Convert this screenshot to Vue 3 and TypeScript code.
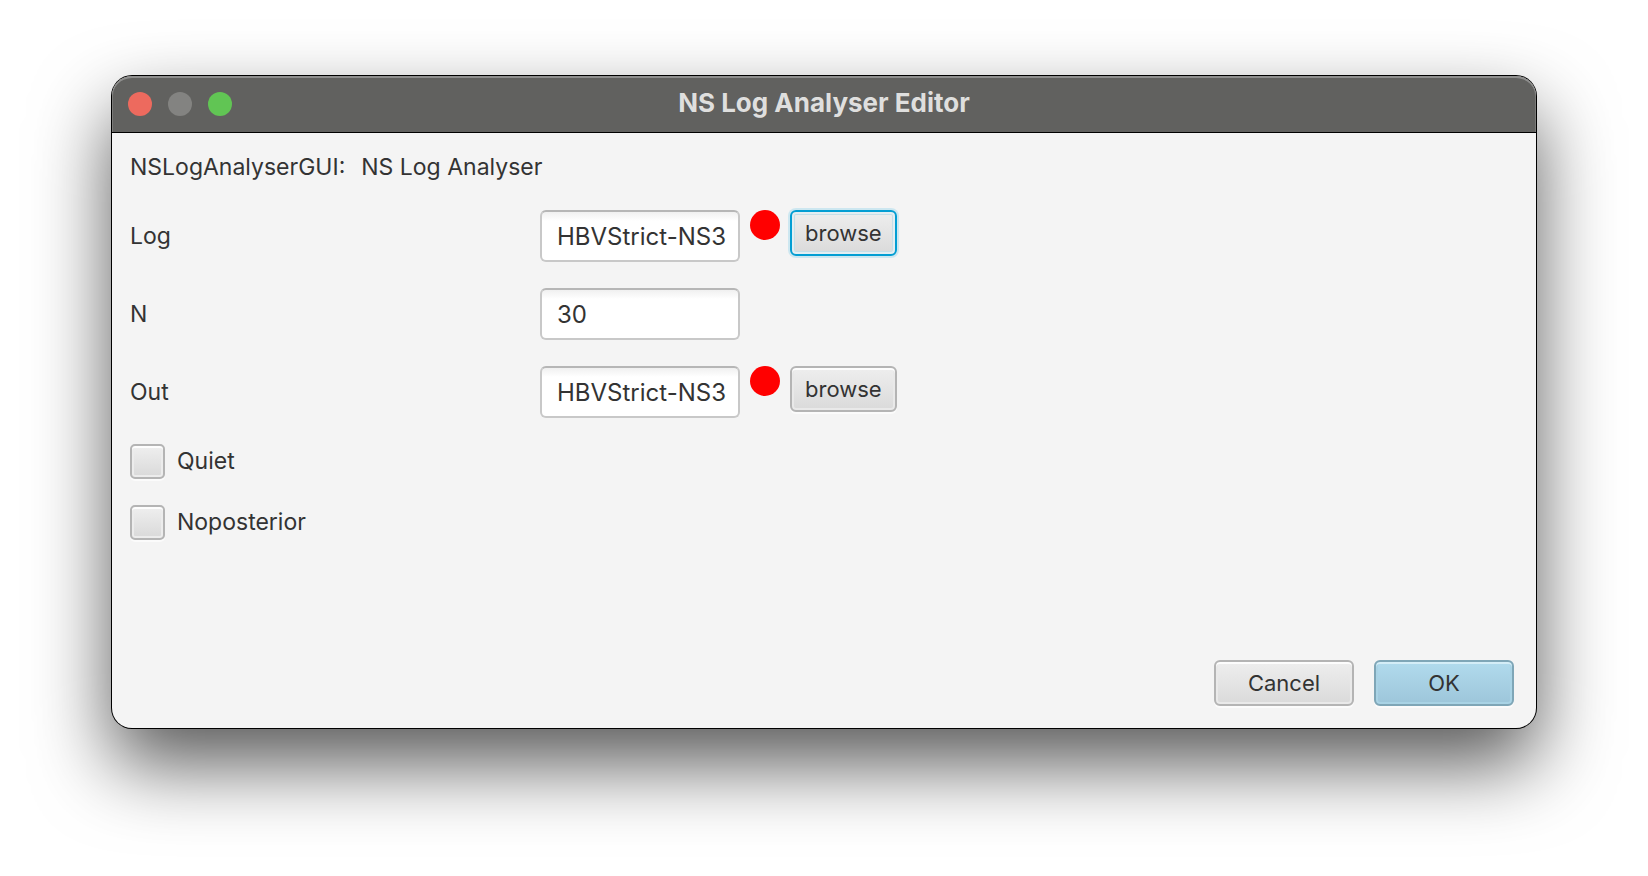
<script setup lang="ts">
import { reactive } from 'vue'

interface Field {
  id: string
  label: string
  value: string
  browse: boolean
  focused?: boolean
}

const fields = reactive<Field[]>([
  { id: 'log', label: 'Log', value: 'HBVStrict-NS3', browse: true, focused: true },
  { id: 'n', label: 'N', value: '30', browse: false },
  { id: 'out', label: 'Out', value: 'HBVStrict-NS3', browse: true },
])

const options = reactive([
  { id: 'quiet', label: 'Quiet', checked: false },
  { id: 'noposterior', label: 'Noposterior', checked: false },
])
</script>

<template>
  <div class="desktop">
    <main class="window">
      <header class="titlebar">
        <div class="lights">
          <button class="light close" type="button" aria-label="Close"></button>
          <button class="light minimise" type="button" aria-label="Minimise" disabled></button>
          <button class="light zoom" type="button" aria-label="Zoom"></button>
        </div>
        <h1 class="title">NS Log Analyser Editor</h1>
      </header>
      <form class="content" @submit.prevent>
        <p class="heading"><span>NSLogAnalyserGUI:</span><span>NS Log Analyser</span></p>
        <div v-for="f in fields" :key="f.id" class="row">
          <label class="name" :for="f.id">{{ f.label }}</label>
          <input :id="f.id" v-model="f.value" class="text" type="text" />
          <template v-if="f.browse">
            <span class="dot"></span>
            <button class="btn" :class="{ focused: f.focused }" type="button">browse</button>
          </template>
        </div>
        <div v-for="o in options" :key="o.id" class="option">
          <input :id="o.id" v-model="o.checked" class="check" type="checkbox" />
          <label :for="o.id">{{ o.label }}</label>
        </div>
        <footer class="actions">
          <button class="btn wide" type="button">Cancel</button>
          <button class="btn wide primary" type="submit">OK</button>
        </footer>
      </form>
    </main>
  </div>
</template>

<style>
body {
  background: #fff;
}
</style>

<style scoped>
.desktop {
  box-sizing: border-box;
  min-height: 100vh;
  padding: 76px 112px 148px;
  display: flex;
  overflow: hidden;
  font-family: Inter, "Liberation Sans", sans-serif;
  font-size: 23px;
  color: #333;
}

.window {
  flex: 1;
  display: flex;
  flex-direction: column;
  border-radius: 20px;
  background: #f4f4f4;
  box-shadow: 0 0 0 1px #000, 0 36px 78px rgba(0, 0, 0, 0.66);
}

.titlebar {
  box-sizing: border-box;
  height: 57px;
  padding: 0 16px;
  display: grid;
  grid-template-columns: 1fr auto 1fr;
  align-items: center;
  border-bottom: 1px solid #000;
  border-radius: 20px 20px 0 0;
  background: #61615f;
  box-shadow: inset 0 2px 0 #8f8f8e, inset 1px 0 0 #7b7b79, inset -1px 0 0 #7b7b79;
}

.lights {
  display: flex;
  gap: 16px;
}

.light {
  width: 24px;
  height: 24px;
  padding: 0;
  border: 0;
  border-radius: 50%;
}

.close {
  background: #ed6a5e;
}

.minimise {
  background: #838381;
}

.zoom {
  background: #61c554;
}

.title {
  margin: 0;
  padding-bottom: 2px;
  font-size: 26px;
  line-height: 32px;
  font-weight: 700;
  color: #dfdfde;
}

.content {
  flex: 1;
  display: flex;
  flex-direction: column;
  gap: 26px;
  padding: 20px 22px 22px 18px;
}

.heading {
  display: flex;
  gap: 16px;
  margin: 0;
  padding-bottom: 3px;
  line-height: 28px;
}

.row {
  display: flex;
  align-items: flex-start;
  gap: 10px;
}

.name {
  width: 400px;
  line-height: 52px;
}

.text {
  box-sizing: border-box;
  width: 200px;
  height: 52px;
  padding: 0 10px 0 15px;
  border: 2px solid #c8c8c8;
  border-top-color: #b6b6b6;
  border-radius: 6px;
  background: linear-gradient(#f0f0f0, #fff 9px);
  font: inherit;
  font-size: 24px;
  color: inherit;
  outline: 0;
}

.dot {
  width: 30px;
  height: 30px;
  border-radius: 50%;
  background: #f00;
}

.btn {
  box-sizing: border-box;
  height: 46px;
  padding: 0 13px;
  border: 2px solid #b4b4b4;
  border-radius: 6px;
  background: linear-gradient(#efefef, #d9d9d9) border-box;
  box-shadow: inset 0 2px 0 #fdfdfd, inset 0 0 0 2px #e9e9e9, 0 2px 0 #fbfbfb;
  font: inherit;
  font-size: 22px;
  color: inherit;
}

.focused {
  border-color: #039ed3;
  box-shadow: inset 0 0 0 2px #e3eef2, inset 0 0 0 3px #c5dfe8, 0 0 0 2px #cde7f0;
}

.wide {
  width: 140px;
}

.primary {
  border-color: #7fa6b7;
  background: linear-gradient(#b2dcee, #9cc5d9) border-box;
  box-shadow: inset 0 2px 0 #d4edf7, inset 0 0 0 2px #a9d3e5, 0 2px 0 #fbfbfb;
}

.option {
  display: flex;
  align-items: center;
  gap: 12px;
  line-height: 35px;
}

.check {
  box-sizing: border-box;
  appearance: none;
  width: 35px;
  height: 35px;
  margin: 0;
  border: 2px solid #b4b4b4;
  border-radius: 5px;
  background: linear-gradient(#efefef, #d9d9d9);
  box-shadow: inset 0 2px 0 #fdfdfd, inset 0 0 0 2px #ececec, 0 2px 0 #fbfbfb;
}

.check:checked {
  background: #039ed3;
}

.actions {
  margin-top: auto;
  display: flex;
  justify-content: flex-end;
  gap: 20px;
}
</style>
